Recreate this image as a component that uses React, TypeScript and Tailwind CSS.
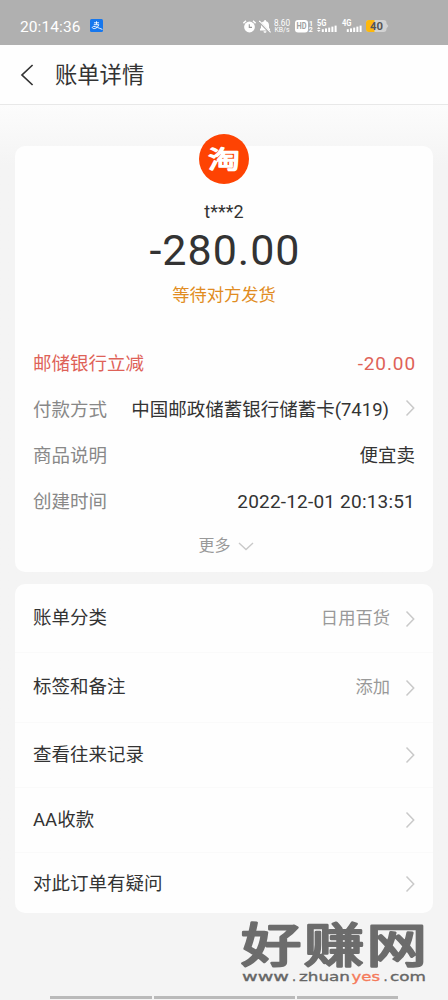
import { clsx } from "clsx"

const details = [
  { label: "邮储银行立减", value: "-20.00", highlight: true, spacing: "text-[19px] tracking-[0.9px] -mr-px" },
  { label: "付款方式", value: "中国邮政储蓄银行储蓄卡(7419)", arrow: true, spacing: "pt-px" },
  { label: "商品说明", value: "便宜卖", spacing: "pt-px" },
  { label: "创建时间", value: "2022-12-01 20:13:51", spacing: "text-[19px] tracking-[0.2px]" },
]

const actions = [
  { label: "账单分类", value: "日用百货", height: "h-[68px] pt-px" },
  { label: "标签和备注", value: "添加", height: "h-[70px]" },
  { label: "查看往来记录", height: "h-[65px]" },
  { label: "AA收款", height: "h-[65px]" },
  { label: "对此订单有疑问", height: "h-[61px] pt-0.5" },
]

function Chevron({ className }: { className?: string }) {
  return (
    <svg viewBox="0 0 10 18" className={clsx("h-[18px] w-[10px] shrink-0", className)} fill="none">
      <path d="M1.5 1.5 8.7 9l-7.2 7.5" stroke="#c9c9c9" strokeWidth="1.5" />
    </svg>
  )
}

function Signal({ label, arrows }: { label: string; arrows?: boolean }) {
  return (
    <svg viewBox="0 0 20 14" className="h-[14px] w-5 overflow-visible" fill="#fff">
      <text x="0" y="6.5" fontSize="8.5" fontWeight="700" textLength="9.5" lengthAdjust="spacingAndGlyphs">{label}</text>
      {arrows && <path d="m0 10 1.8-2 1.8 2zM0 11l1.8 2 1.8-2z" />}
      <rect x="4.8" y="10.2" width="2" height="2.8" />
      <rect x="8" y="9.4" width="2" height="3.6" />
      <rect x="11.2" y="8.6" width="2" height="4.4" />
      <rect x="14.4" y="7.6" width="2" height="5.4" />
      <rect x="17.6" y="6.6" width="2" height="6.4" />
    </svg>
  )
}

function StatusBar() {
  return (
    <div className="flex h-[45px] items-center bg-[#b0b0b0] pt-[9px] pl-5 text-white">
      <span className="w-[61px] text-[15.5px] leading-5 tracking-[0.1px] whitespace-nowrap">20:14:36</span>
      <svg viewBox="0 0 13 13" className="-mt-[3px] ml-[9px] size-[13px]">
        <rect width="13" height="13" rx="1.5" fill="#1677ee" />
        <path
          d="M4 3.8h5M6.5 2.3v3M3.8 5.7h5C8 7.8 6.2 9.6 4.2 9.6 1.6 9.6 1.9 7.4 4 7.4c2 0 4 1.5 8.4 3"
          fill="none"
          stroke="#fff"
          strokeWidth="0.9"
        />
      </svg>
      <div className="-mt-[2px] ml-[140px] flex items-center">
        <svg viewBox="0 0 13 13" className="size-[13px]" fill="#fff">
          <circle cx="6.5" cy="7" r="5.4" />
          <path d="M.4 3.2 3 .8M12.6 3.2 10 .8" stroke="#fff" strokeWidth="1.4" />
          <path d="M6.3 4.2v3.2h2.7" fill="none" stroke="#999" strokeWidth="1.1" />
        </svg>
        <svg viewBox="0 0 12 13" className="ml-[3px] h-[13px] w-3" fill="#fff">
          <path d="M1 10.5V9l1-1V5.2C2 3 3.4 1.6 5.1 1.2c0-1.6 2-1.6 2 0C8.8 1.6 10 3 10 5.2V8l1 1v1.5zM4.5 11.2h3c0 2-3 2-3 0z" />
          <path d="M.5 2 11 12.8" stroke="#b0b0b0" strokeWidth="2" />
          <path d="M.3.8 11.6 12.4" stroke="#fff" strokeWidth="1.1" />
        </svg>
        <svg viewBox="0 0 16 14" className="ml-[3px] h-[14px] w-4 overflow-visible" fill="#fff">
          <text x="0" y="6.6" fontSize="8.5" textLength="16" lengthAdjust="spacingAndGlyphs">8.60</text>
          <text x="0.5" y="12.8" fontSize="6.5" textLength="15" lengthAdjust="spacingAndGlyphs">KB/s</text>
        </svg>
        <svg viewBox="0 0 18 13" className="ml-[5px] h-[13px] w-[18px] overflow-visible" fontWeight="700">
          <rect width="13" height="12.5" rx="3" fill="#fff" />
          <text x="1.5" y="9.4" fontSize="8.5" fill="#a0a0a0" textLength="10" lengthAdjust="spacingAndGlyphs">HD</text>
          <text x="14" y="5.6" fontSize="7" fill="#fff">1</text>
          <text x="13.8" y="12.4" fontSize="7" fill="#fff">2</text>
        </svg>
        <div className="ml-1"><Signal label="5G" arrows /></div>
        <div className="ml-[5px]"><Signal label="4G" /></div>
        <svg viewBox="0 0 23 12" className="ml-1 h-3 w-[23px]">
          <path d="M3 0h14.5a3 3 0 0 1 3 3v6a3 3 0 0 1-3 3H3a3 3 0 0 1-3-3V3a3 3 0 0 1 3-3zM20.5 3.5 22.4 6l-1.9 2.5z" fill="#d2d2d2" />
          <path d="M3 0h5.5v12H3a3 3 0 0 1-3-3V3a3 3 0 0 1 3-3z" fill="#fdb80c" />
          <text x="4" y="9.9" fontSize="10.5" fontWeight="700" fill="#555" textLength="13" lengthAdjust="spacingAndGlyphs">40</text>
        </svg>
      </div>
    </div>
  )
}

function TaobaoLogo() {
  return (
    <svg viewBox="0 0 50 50" className="size-[50px]">
      <circle cx="25" cy="25" r="25" fill="#fe4303" />
      <text
        x="25"
        y="35"
        textAnchor="middle"
        fontSize="27"
        fill="#fff"
        stroke="#fff"
        strokeWidth="1.5"
        strokeLinejoin="round"
        textLength="32"
        lengthAdjust="spacingAndGlyphs"
        transform="translate(0 3) scale(1 .9)"
      >
        淘
      </text>
    </svg>
  )
}

function Watermark() {
  return (
    <svg viewBox="0 0 190 70" className="absolute top-[918px] left-[239px] h-[70px] w-[190px]">
      <text
        transform="translate(2 43.5) scale(1.3 1)"
        fontSize="46.5"
        fill="#6c6c6c"
        stroke="#6c6c6c"
        strokeWidth="2.4"
        strokeLinejoin="round"
        letterSpacing="1.8"
      >
        好赚网
      </text>
      <g fontSize="12.8" fill="#666" stroke="#666" strokeWidth=".35" className="font-['DejaVu_Sans',sans-serif]">
        <text x="3" y="62.5" textLength="47" lengthAdjust="spacingAndGlyphs">www</text>
        <text x="53" y="62.5">.</text>
        <text x="60" y="62.5" textLength="51" lengthAdjust="spacingAndGlyphs">zhuan</text>
        <text x="112.5" y="62.5" textLength="28.5" lengthAdjust="spacingAndGlyphs" fill="#f47b5b" stroke="#f47b5b">yes</text>
        <text x="144.5" y="62.5">.</text>
        <text x="151" y="62.5" textLength="36" lengthAdjust="spacingAndGlyphs">com</text>
      </g>
    </svg>
  )
}

export default function App() {
  return (
    <div className="relative h-[1000px] w-[448px] overflow-hidden bg-[#f4f4f4] font-['Roboto','Noto_Sans_CJK_SC',sans-serif] text-[#333]">
      <StatusBar />
      <header className="flex h-[60px] items-center border-b border-[#e8e8e8] bg-[#fefefe] pl-5">
        <svg viewBox="0 0 14 22" className="h-[22px] w-[14px]" fill="none">
          <path d="M12.6 1 2 11l10.6 10" stroke="#333" strokeWidth="1.7" />
        </svg>
        <h1 className="ml-[21px] text-[22.3px] leading-[30px]">账单详情</h1>
      </header>

      <main className="bg-linear-to-b from-[#fcfcfc] to-[#f4f4f4] to-[60px] px-[15px] pt-[41px]">
        <section className="flex h-[426px] flex-col rounded-[10px] bg-[#fefefe]">
          <div className="-mt-[12px] flex flex-col items-center">
            <TaobaoLogo />
            <div className="mt-[16px] text-[18px] leading-6">t***2</div>
            <div className="mt-px ml-[2px] text-[43px] leading-[50px] tracking-[1px]">-280.00</div>
            <div className="mt-[8px] text-[17.3px] leading-6 text-[#e18c22]">等待对方发货</div>
          </div>

          <dl className="mt-[34px] px-[18px]">
            {details.map(({ label, value, highlight, arrow, spacing }) => (
              <div
                key={label}
                className={clsx("flex h-[46px] items-center justify-between text-[18.5px]", highlight && "text-[#de6258]")}
              >
                <dt className={clsx("pt-0.5 whitespace-nowrap", !highlight && "text-[#888]")}>{label}</dt>
                <dd className="flex items-center whitespace-nowrap">
                  <span className={spacing}>{value}</span>
                  {arrow && <Chevron className="-mt-1 ml-4" />}
                </dd>
              </div>
            ))}
          </dl>

          <button className="mt-px ml-1 flex h-10 items-center self-center text-[16px] text-[#999]">
            更多
            <svg viewBox="0 0 16 9" className="ml-[7px] h-[9px] w-4" fill="none">
              <path d="m1 1 7 6.5L15 1" stroke="#c9c9c9" strokeWidth="1.4" />
            </svg>
          </button>
        </section>

        <section className="mt-3 rounded-[10px] bg-[#fefefe]">
          {actions.map(({ label, value, height }, i) => (
            <div
              key={label}
              className={clsx("flex items-center px-[18px] text-[18.5px]", height, i > 0 && "border-t border-[#fafafa]")}
            >
              <span className="pt-px">{label}</span>
              <span className="ml-auto pt-px text-[17.3px] text-[#999]">{value}</span>
              <Chevron className="ml-[15px]" />
            </div>
          ))}
        </section>
      </main>

      <Watermark />
      <div className="absolute bottom-px left-[50px] flex gap-[2px]">
        <div className="h-[3px] w-[102px] bg-[#bababa]" />
        <div className="h-[3px] w-[141px] bg-[#bababa]" />
        <div className="h-[3px] w-[101px] bg-[#bababa]" />
      </div>
    </div>
  )
}
